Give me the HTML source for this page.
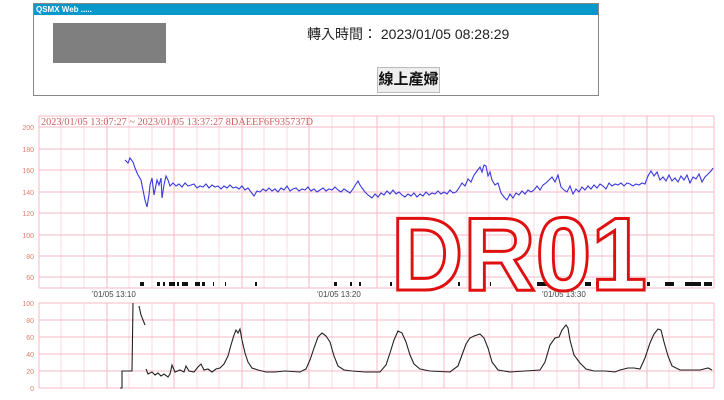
<!DOCTYPE html>
<html><head><meta charset="utf-8"><style>
body{margin:0;background:#fff;width:724px;height:400px;overflow:hidden;position:relative;font-family:"Liberation Sans","Noto Sans CJK TC",sans-serif}
.box{position:absolute;left:33px;top:3px;width:564px;height:91px;border:1px solid #888;background:#fff}
.bar{height:11px;background:#0a97c9;color:#fff;font-size:8px;font-weight:bold;line-height:11px;padding-left:2px}
.gray{position:absolute;left:19px;top:19px;width:113px;height:40px;background:#7f7f7f}
.time{position:absolute;left:273px;top:20px;font-size:14px;color:#222;white-space:nowrap}
.btn{position:absolute;left:343px;top:63px;width:61px;height:24px;background:#eee;border:1px solid #bbb;font-size:15px;font-weight:bold;text-align:center;line-height:24px;color:#111}
svg{position:absolute;left:0;top:0}
</style></head><body>
<div class="box"><div class="bar">QSMX Web .....</div><div class="gray"></div>
<div class="time">轉入時間： 2023/01/05 08:28:29</div><div class="btn">線上產婦</div></div>
<svg width="724" height="400" font-family="Liberation Sans,sans-serif">
<g stroke="#fadbe0" stroke-width="1">
<path d="M61 116V288M84 116V288M129 116V288M152 116V288M197 116V288M219 116V288M264 116V288M287 116V288M332 116V288M354 116V288M399 116V288M422 116V288M467 116V288M489 116V288M534 116V288M557 116V288M602 116V288M624 116V288M669 116V288M692 116V288"/>
<path d="M61 303V388M84 303V388M129 303V388M152 303V388M197 303V388M219 303V388M264 303V388M287 303V388M332 303V388M354 303V388M399 303V388M422 303V388M467 303V388M489 303V388M534 303V388M557 303V388M602 303V388M624 303V388M669 303V388M692 303V388"/>
</g>
<g stroke="#f5b8c4" stroke-width="1">
<path d="M39 116V288M107 116V288M174 116V288M242 116V288M309 116V288M377 116V288M444 116V288M512 116V288M579 116V288M647 116V288M714 116V288"/>
<path d="M39 303V388M107 303V388M174 303V388M242 303V388M309 303V388M377 303V388M444 303V388M512 303V388M579 303V388M647 303V388M714 303V388"/>
<path d="M39 116H714M39 127H714M39 149H714M39 170H714M39 192H714M39 213H714M39 235H714M39 256H714M39 277H714M39 288H714"/>
<path d="M39 303H714M39 320H714M39 337H714M39 354H714M39 371H714M39 388H714"/>
</g>
<g fill="#e08070" font-size="7" text-anchor="end">
<text x="34" y="130">200</text><text x="34" y="152">180</text><text x="34" y="173">160</text><text x="34" y="195">140</text><text x="34" y="216">120</text><text x="34" y="238">100</text><text x="34" y="259">80</text><text x="34" y="280">60</text>
<text x="34" y="306">100</text><text x="34" y="323">80</text><text x="34" y="340">60</text><text x="34" y="357">40</text><text x="34" y="374">20</text><text x="34" y="391">0</text>
</g>
<text x="41" y="125" font-size="10" fill="#d06060" font-family="Liberation Serif,serif" textLength="272" lengthAdjust="spacingAndGlyphs">2023/01/05 13:07:27 ~ 2023/01/05 13:37:27  8DAEEF6F935737D</text>
<g font-size="8" fill="#444"><text x="92" y="297">'01/05 13:10</text><text x="317" y="297">'01/05 13:20</text><text x="542" y="297">'01/05 13:30</text></g>
<path fill="none" stroke="#3a3ae0" stroke-width="1.1" d="M125 160L128 163 130 158 133 162 135 168 138 175 141 180 143 190 145 200 147 207 149 195 150 185 152 178 154 195 155 190 157 180 159 185 161 178 162 198 164 185 166 176 168 180 170 186 173 183 176 186 179 184 182 187 185 183 188 186 191 185 194 184 197 188 200 186 203 187 206 184 209 188 212 185 215 187 218 186 221 189 224 186 227 188 230 185 233 188 236 187 239 189 242 186 245 190 248 188 251 192 254 196 257 191 260 192 263 189 266 191 269 188 272 191 275 189 278 192 281 188 284 190 287 186 290 191 293 189 296 188 299 191 302 189 305 190 308 187 311 191 314 189 317 192 320 190 323 188 326 191 329 189 332 190 335 187 338 190 341 192 344 189 347 191 350 193 353 189 356 184 358 181 360 185 362 188 365 192 368 195 372 198 375 194 378 197 381 193 384 195 387 191 390 194 393 190 396 194 399 192 402 195 405 197 408 194 411 196 414 193 417 197 420 194 423 196 426 192 429 195 432 193 435 194 438 191 441 194 444 192 447 194 450 190 453 193 456 192 459 188 462 183 465 186 468 179 471 182 474 175 477 171 480 167 482 172 484 165 486 166 488 176 490 172 492 180 495 185 498 183 501 193 504 197 507 200 510 194 513 198 516 193 519 195 522 191 525 194 528 190 531 192 534 190 537 186 540 190 543 185 546 183 549 180 552 177 555 182 558 175 561 187 564 190 567 192 570 186 573 194 576 189 579 192 582 187 585 190 588 186 591 189 594 185 597 188 600 184 603 186 606 189 609 183 612 186 615 184 618 185 621 183 624 186 627 183 630 184 633 186 636 184 639 185 642 183 645 184 648 176 651 171 654 176 657 172 660 180 663 177 666 181 669 175 672 181 675 178 678 182 681 176 684 180 687 175 690 183 693 177 696 179 699 174 702 182 705 177 708 174 711 171 713 168"/>
<path fill="none" stroke="#222" stroke-width="1.1" d="M120 388L122 388 122 371 132 371 133 303M139 306L141 315 145 325M146 369L148 374 152 372 155 375 158 373 161 376 164 374 168 377 170 374 172 365 175 372 180 370 184 372 186 366 189 371 194 372 198 367 201 364 204 370 208 369 212 372 216 369 220 368 224 364 228 356 231 345 234 335 236 330 238 333 240 329 242 340 245 353 248 362 252 368 258 370 266 372 275 372 285 371 300 372 306 369 310 360 314 348 318 337 322 333 326 336 330 342 334 356 338 366 344 370 352 371 365 372 380 372 386 365 390 353 394 340 398 331 402 333 406 342 410 355 414 364 420 369 430 371 450 372 458 366 462 355 466 344 470 338 474 336 480 334 484 338 488 348 492 362 498 370 510 372 525 371 540 370 545 362 550 345 555 338 559 337 562 330 566 325 568 328 570 340 574 355 580 363 586 369 594 371 605 371 615 372 620 370 624 369 628 368 634 368 640 369 645 358 650 343 654 334 658 329 661 330 664 342 668 356 672 366 680 370 700 370 708 368 712 370"/>
<g fill="#111">
<rect x="140" y="282" width="4" height="4"/><rect x="157" y="282" width="3" height="4"/><rect x="163" y="282" width="2" height="4"/><rect x="169" y="282" width="6" height="4"/><rect x="177" y="282" width="2" height="4"/><rect x="182" y="282" width="6" height="4"/><rect x="195" y="282" width="5" height="4"/><rect x="202" y="282" width="3" height="4"/><rect x="213" y="282" width="1" height="4"/><rect x="225" y="282" width="1" height="4"/><rect x="255" y="282" width="2" height="4"/><rect x="334" y="282" width="3" height="4"/><rect x="350" y="282" width="2" height="4"/><rect x="359" y="282" width="2" height="4"/><rect x="390" y="282" width="2" height="4"/><rect x="400" y="282" width="2" height="4"/><rect x="405" y="282" width="2" height="4"/><rect x="412" y="282" width="6" height="4"/><rect x="425" y="282" width="3" height="4"/><rect x="458" y="282" width="2" height="4"/><rect x="490" y="282" width="1" height="4"/><rect x="520" y="282" width="1" height="4"/><rect x="537" y="282" width="14" height="4"/><rect x="565" y="282" width="6" height="4"/><rect x="585" y="282" width="6" height="4"/><rect x="596" y="282" width="3" height="4"/><rect x="607" y="282" width="16" height="4"/><rect x="630" y="282" width="12" height="4"/><rect x="647" y="282" width="3" height="4"/><rect x="665" y="282" width="9" height="4"/><rect x="685" y="282" width="16" height="4"/><rect x="704" y="282" width="8" height="4"/>
</g>
<text x="391" y="290" font-size="104" font-weight="bold" fill="#fff" stroke="#e01010" stroke-width="3" textLength="256" lengthAdjust="spacingAndGlyphs">DR01</text>
</svg>
</body></html>
